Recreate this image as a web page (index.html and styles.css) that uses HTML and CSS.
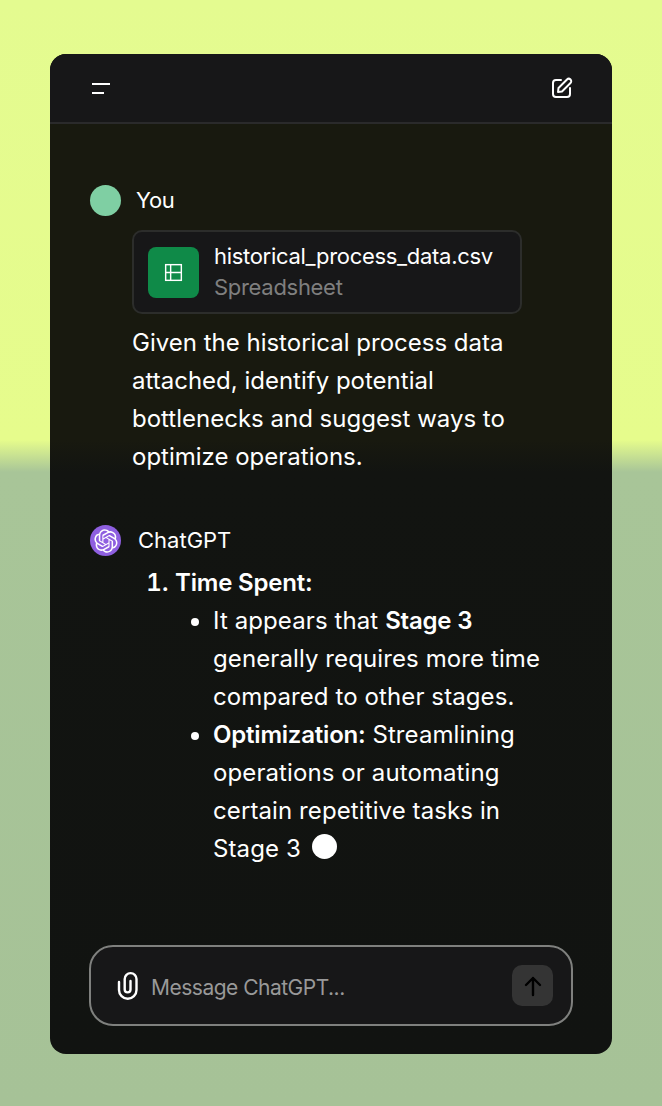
FILE: index.html
```html
<!DOCTYPE html>
<html lang="en">
<head>
<meta charset="utf-8">
<title>ChatGPT</title>
<link rel="stylesheet" href="styles.css">
</head>
<body>
<main class="window">
  <header class="topbar">
    <svg class="menu-icon" width="20" height="13" viewBox="0 0 20 13" fill="none" stroke="#fff" stroke-width="2"><path d="M1 2h18M1 11h12"/></svg>
    <svg class="edit-icon" width="22" height="22" viewBox="0 0 22 22" fill="none" stroke="#fff" stroke-width="2" stroke-linecap="round" stroke-linejoin="round"><path d="M10 3H5a3 3 0 0 0-3 3v11a3 3 0 0 0 3 3h11a3 3 0 0 0 3-3v-6"/><path d="M7.500 11 16 2.500a2.300 2.300 0 0 1 3.500 3.500L11 14.500l-4 .5z"/></svg>
  </header>
  <section class="chat">
    <div class="msg-head user-head">
      <span class="avatar green"></span>
      <span class="name">You</span>
    </div>
    <div class="user-body">
      <div class="file">
        <span class="file-icon">
          <svg width="19" height="19" viewBox="0 0 20 20" fill="none" stroke="#fff" stroke-width="1.500"><rect x="1.750" y="1.750" width="16.500" height="16.500"/><path d="M1.750 10h16.500M7 1.750v16.500"/></svg>
        </span>
        <span class="file-text">
          <span class="file-name">historical_process_data.csv</span>
          <span class="file-type">Spreadsheet</span>
        </span>
      </div>
      <p class="prompt">Given the historical process data attached, identify potential bottlenecks and suggest ways to optimize operations.</p>
    </div>
    <div class="msg-head gpt-head">
      <span class="avatar purple">
        <svg width="24" height="24" viewBox="0 0 41 41" fill="#fff"><path d="M37.5324 16.8707C37.9808 15.5241 38.1363 14.0974 37.9886 12.6859C37.8409 11.2744 37.3934 9.91076 36.676 8.68622C35.6126 6.83404 33.9882 5.3676 32.0373 4.4985C30.0864 3.62941 27.9098 3.40259 25.8215 3.85078C24.8796 2.7893 23.7219 1.94125 22.4257 1.36341C21.1295 0.785575 19.7249 0.491269 18.3058 0.500197C16.1708 0.495044 14.0893 1.16803 12.3614 2.42214C10.6335 3.67624 9.34853 5.44666 8.6917 7.47815C7.30085 7.76286 5.98686 8.3414 4.8377 9.17505C3.68854 10.0087 2.73073 11.0782 2.02839 12.312C0.956464 14.1591 0.498905 16.2988 0.721698 18.4228C0.944492 20.5467 1.83612 22.5449 3.268 24.1293C2.81966 25.4759 2.66413 26.9026 2.81182 28.3141C2.95951 29.7256 3.40701 31.0892 4.12437 32.3138C5.18791 34.1659 6.8123 35.6322 8.76321 36.5013C10.7141 37.3704 12.8907 37.5973 14.9789 37.1492C15.9208 38.2107 17.0786 39.0587 18.3747 39.6366C19.6709 40.2144 21.0755 40.5087 22.4946 40.4998C24.6307 40.5054 26.7133 39.8321 28.4418 38.5772C30.1704 37.3223 31.4556 35.5506 32.1119 33.5179C33.5027 33.2332 34.8167 32.6547 35.9659 31.821C37.115 30.9874 38.0728 29.9178 38.7752 28.684C39.8458 26.8371 40.3023 24.6979 40.0789 22.5748C39.8556 20.4517 38.9639 18.4544 37.5324 16.8707ZM22.4978 37.8849C20.7443 37.8874 19.0459 37.2733 17.6994 36.1501C17.7601 36.117 17.8666 36.0586 17.936 36.0161L25.9004 31.4156C26.1003 31.3019 26.2663 31.137 26.3813 30.9378C26.4964 30.7386 26.5563 30.5124 26.5549 30.2825V19.0542L29.9213 20.998C29.9389 21.0068 29.9541 21.0198 29.9656 21.0359C29.977 21.052 29.9842 21.0707 29.9867 21.0902V30.3889C29.9842 32.375 29.1946 34.2791 27.7909 35.6841C26.3872 37.0892 24.4838 37.8806 22.4978 37.8849ZM6.39227 31.0064C5.51397 29.4888 5.19742 27.7107 5.49804 25.9832C5.55718 26.0187 5.66048 26.0818 5.73461 26.1244L13.699 30.7248C13.8975 30.8408 14.1233 30.902 14.3532 30.902C14.583 30.902 14.8088 30.8408 15.0073 30.7248L24.731 25.1103V28.9979C24.7321 29.0177 24.7283 29.0376 24.7199 29.0556C24.7115 29.0736 24.6988 29.0893 24.6829 29.1012L16.6317 33.7497C14.9096 34.7416 12.8643 35.0097 10.9447 34.4954C9.02506 33.9811 7.38785 32.7263 6.39227 31.0064ZM4.29707 13.6194C5.17156 12.0998 6.55279 10.9364 8.19885 10.3327C8.19885 10.4013 8.19491 10.5228 8.19491 10.6071V19.808C8.19351 20.0378 8.25334 20.2638 8.36823 20.4629C8.48312 20.6619 8.64893 20.8267 8.84863 20.9404L18.5723 26.5542L15.206 28.4979C15.1894 28.5089 15.1703 28.5155 15.1505 28.5173C15.1307 28.5191 15.1107 28.516 15.0924 28.5082L7.04046 23.8557C5.32135 22.8601 4.06716 21.2235 3.55289 19.3046C3.03862 17.3858 3.30624 15.3413 4.29707 13.6194ZM31.955 20.0556L22.2312 14.4411L25.5976 12.4981C25.6142 12.4872 25.6333 12.4805 25.6531 12.4787C25.6729 12.4769 25.6928 12.4801 25.7111 12.4879L33.7631 17.1364C34.9967 17.849 36.0017 18.8982 36.6606 20.1613C37.3194 21.4244 37.6047 22.849 37.4832 24.2684C37.3617 25.6878 36.8382 27.0432 35.9743 28.1759C35.1103 29.3086 33.9415 30.1717 32.6047 30.6641C32.6047 30.5947 32.6047 30.4733 32.6047 30.3889V21.188C32.6066 20.9586 32.5474 20.7328 32.4332 20.5338C32.319 20.3348 32.154 20.1698 31.955 20.0556ZM35.3055 15.0128C35.2464 14.9765 35.1431 14.9142 35.069 14.8717L27.1045 10.2712C26.906 10.1554 26.6803 10.0943 26.4504 10.0943C26.2206 10.0943 25.9948 10.1554 25.7963 10.2712L16.0726 15.8858V11.9982C16.0715 11.9783 16.0753 11.9585 16.0837 11.9405C16.0921 11.9225 16.1048 11.9068 16.1207 11.8949L24.1719 7.25025C25.4053 6.53903 26.8158 6.19376 28.2383 6.25482C29.6608 6.31589 31.0364 6.78077 32.2044 7.59508C33.3723 8.40939 34.2842 9.53945 34.8334 10.8531C35.3826 12.1667 35.5464 13.6095 35.3055 15.0128ZM14.2424 21.9419L10.8752 19.9981C10.8576 19.9893 10.8423 19.9763 10.8309 19.9602C10.8195 19.9441 10.8122 19.9254 10.8098 19.9058V10.6071C10.8107 9.18295 11.2173 7.78848 11.9819 6.58696C12.7466 5.38544 13.8377 4.42659 15.1275 3.82264C16.4173 3.21869 17.8524 2.99464 19.2649 3.1767C20.6775 3.35876 22.0089 3.93941 23.1034 4.85067C23.0427 4.88379 22.937 4.94215 22.8668 4.98473L14.9024 9.58517C14.7025 9.69878 14.5366 9.86356 14.4215 10.0626C14.3065 10.2616 14.2466 10.4877 14.2479 10.7175L14.2424 21.9419ZM16.071 17.9991L20.4018 15.4978L24.7325 17.9975V22.9985L20.4018 25.4983L16.071 22.9985V17.9991Z"/></svg>
      </span>
      <span class="name">ChatGPT</span>
    </div>
    <ol class="answer">
      <li><strong>Time Spent:</strong>
        <ul>
          <li>It appears that <strong>Stage 3</strong> generally requires more time compared to other stages.</li>
          <li><strong>Optimization:</strong> Streamlining operations or automating certain repetitive tasks in Stage 3 <span class="cursor"></span></li>
        </ul>
      </li>
    </ol>
  </section>
  <footer class="composer">
    <svg class="clip" width="24" height="30" viewBox="0 0 24 30" fill="none" stroke="#fff" stroke-width="2.400" stroke-linecap="round"><path d="M14.500 10v8.500a2.900 2.900 0 0 1-5.800 0V8a5.900 5.900 0 0 1 11.800 0v11a8.750 8.750 0 0 1-17.500 0v-8"/></svg>
    <span class="placeholder">Message ChatGPT...</span>
    <span class="send">
      <svg width="20" height="22" viewBox="0 0 20 22" fill="none" stroke="#000" stroke-width="2.400" stroke-linecap="round" stroke-linejoin="round"><path d="M10 20V3M3 10l7-7 7 7"/></svg>
    </span>
  </footer>
</main>
</body>
</html>
```
FILE: styles.css
```css
* { box-sizing: border-box; }
html, body { height: 100%; }
body {
  margin: 0;
  height: 1106px;
  padding: 54px 50px 52px;
  overflow: hidden;
  font-family: Inter, "Liberation Sans", sans-serif;
  color: #fff;
  background: linear-gradient(180deg, #e4fb90 0, #e6fc8c 440px, #a8c598 472px, #a6c297 100%);
}
.window {
  width: 562px;
  height: 1000px;
  border-radius: 16px;
  background: linear-gradient(180deg, #18190f 0, #18190f 386px, #121411 418px, #111311 100%);
  display: flex;
  flex-direction: column;
  overflow: hidden;
}
.topbar {
  height: 70px;
  flex: none;
  background: #171718;
  border-bottom: 2px solid #2a2a2b;
  display: flex;
  align-items: center;
  justify-content: space-between;
  padding: 0 39px 0 41px;
}
.chat {
  flex: 1;
  padding: 61px 40px 0;
  font-size: 24px;
  line-height: 38px;
}
.msg-head { display: flex; align-items: center; }
.avatar {
  width: 31px;
  height: 31px;
  border-radius: 50%;
  flex: none;
  display: flex;
  align-items: center;
  justify-content: center;
}
.green { background: #7fcfa3; }
.purple { background: #8e5fe0; }
.name { font-size: 22px; line-height: 31px; }
.user-head .name { margin-left: 15px; letter-spacing: -0.3px; }
.gpt-head .name { margin-left: 17px; }
.user-body { margin-left: 42px; margin-top: 14px; }
.file {
  width: 390px;
  height: 84px;
  border: 2px solid #2c2d2b;
  border-radius: 10px;
  background: #171718;
  display: flex;
  align-items: center;
  padding-left: 14px;
}
.file-icon {
  width: 51px;
  height: 51px;
  border-radius: 8px;
  background: #0f8a48;
  display: flex;
  align-items: center;
  justify-content: center;
  flex: none;
}
.file-text { display: flex; flex-direction: column; margin-left: 15px; line-height: 31px; font-size: 22px; letter-spacing: -0.3px; }
.file-type { color: #7f7f7f; }
.prompt { margin: 10px 0 0; width: 390px; }
.gpt-head { margin-top: 49px; }
.answer { margin: 8px 0 0; padding: 0 20px 0 85px; letter-spacing: 0.1px; }
.answer > li::marker { font-weight: 600; }
.answer ul { margin: 0; padding: 0 0 0 38px; list-style: disc; }
strong { font-weight: 600; letter-spacing: -0.2px; }
.cursor {
  display: inline-block;
  width: 25px;
  height: 25px;
  border-radius: 50%;
  background: #fff;
  margin-left: 4px;
  vertical-align: -2px;
}
.composer {
  flex: none;
  height: 81px;
  margin: 0 39px 28px 39px;
  border: 2px solid #7f807e;
  border-radius: 24px;
  background: #171718;
  display: flex;
  align-items: center;
  padding: 0 18px 0 25px;
}
.placeholder { color: #999; font-size: 21px; margin: 3px 0 0 11px; flex: 1; letter-spacing: -0.5px; }
.send {
  width: 41px;
  height: 41px;
  border-radius: 10px;
  background: #343434;
  display: flex;
  align-items: center;
  justify-content: center;
}
```
